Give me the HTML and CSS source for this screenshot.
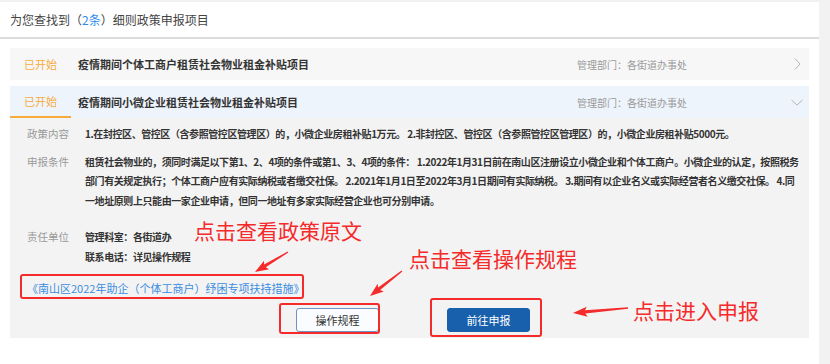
FILE: index.html
```html
<!DOCTYPE html>
<html lang="zh-CN">
<head>
    <meta charset="UTF-8">
    <title>细则政策申报项目</title>
    <link rel="stylesheet" href="styles.css">
</head>
<body>
    <div class="panel">
        <div class="head">为您查找到（<span class="num">2条</span>）细则政策申报项目</div>
        <ul class="list">
            <li class="item">
                <div class="item-head">
                    <span class="state">已开始</span>
                    <span class="title">疫情期间个体工商户租赁社会物业租金补贴项目</span>
                    <span class="dept">管理部门：各街道办事处</span>
                    <span class="arrow">
                        <svg width="7" height="12" viewBox="0 0 7 12"><polyline points="1,0.5 6,6 1,11.5" fill="none" stroke="#b5b5b5" stroke-width="1"/></svg>
                    </span>
                </div>
            </li>
            <li class="item open">
                <div class="item-head">
                    <span class="state">已开始</span>
                    <span class="title">疫情期间小微企业租赁社会物业租金补贴项目</span>
                    <span class="dept">管理部门：各街道办事处</span>
                    <span class="arrow">
                        <svg width="12" height="7" viewBox="0 0 12 7"><polyline points="0.5,1 6,6 11.5,1" fill="none" stroke="#b5b5b5" stroke-width="1"/></svg>
                    </span>
                </div>
                <div class="item-body">
                    <div class="field">
                        <div class="label">政策内容</div>
                        <div class="value">1.在封控区、管控区（含参照管控区管理区）的，小微企业房租补贴1万元。 2.非封控区、管控区（含参照管控区管理区）的，小微企业房租补贴5000元。</div>
                    </div>
                    <div class="field">
                        <div class="label">申报条件</div>
                        <div class="value">租赁社会物业的，须同时满足以下第1、2、4项的条件或第1、3、4项的条件： 1.2022年1月31日前在南山区注册设立小微企业和个体工商户。小微企业的认定，按照税务部门有关规定执行；个体工商户应有实际纳税或者缴交社保。 2.2021年1月1日至2022年3月1日期间有实际纳税。 3.期间有以企业名义或实际经营者名义缴交社保。 4.同一地址原则上只能由一家企业申请，但同一地址有多家实际经营企业也可分别申请。</div>
                    </div>
                    <div class="field unit">
                        <div class="label">责任单位</div>
                        <div class="value">管理科室：各街道办<br>联系电话：详见操作规程</div>
                    </div>
                    <div class="doc"><a href="#">《南山区2022年助企（个体工商户）纾困专项扶持措施》</a></div>
                    <div class="btns">
                        <a class="btn btn-line" href="#">操作规程</a>
                        <a class="btn btn-blue" href="#">前往申报</a>
                    </div>
                </div>
            </li>
        </ul>
    </div>

    <!-- 标注 -->
    <div class="notes">
        <div class="box box1"></div>
        <div class="box box2"></div>
        <div class="box box3"></div>
        <div class="tip tip1">点击查看政策原文</div>
        <div class="tip tip2">点击查看操作规程</div>
        <div class="tip tip3">点击进入申报</div>
        <svg class="marks" width="830" height="364" viewBox="0 0 830 364">
            <g fill="#f52a2a">
                <polygon transform="translate(288,252) rotate(148.8)" points="0,-0.6 27,-1.6 25,-5 38.6,0 25,5 27,1.6 0,0.6"/>
                <polygon transform="translate(402,271) rotate(142)" points="0,-0.6 29,-1.6 27,-5 40.6,0 27,5 29,1.6 0,0.6"/>
                <polygon transform="translate(628,308) rotate(174.8)" points="0,-0.7 43,-1.6 41,-5 55.2,0 41,5 43,1.6 0,0.7"/>
            </g>
        </svg>
    </div>
</body>
</html>
```

FILE: styles.css
```css
* {
    margin: 0;
    padding: 0;
    list-style: none;
}
body {
    position: relative;
    height: 364px;
    overflow: hidden;
    background: #f2f2f2;
    font-family: "Microsoft YaHei", "Noto Sans CJK SC", sans-serif;
    color: #333;
}
a {
    text-decoration: none;
}
.panel {
    margin: 2px 11px 0 0;
    height: 362px;
    background: #fff;
}
.head {
    height: 35px;
    line-height: 35px;
    padding-left: 10px;
    font-size: 12px;
    color: #444;
    border-bottom: 2px solid #dcdcdc;
}
.head .num {
    color: #2d8cf0;
}
.list {
    padding: 9px 10px 0 10px;
}
.item {
    margin-bottom: 6px;
}
.item-head {
    display: flex;
    align-items: center;
    height: 32px;
    background: #f7f7f7;
}
.open .item-head {
    background: #eef4fc;
}
.state {
    width: 61px;
    height: 32px;
    line-height: 32px;
    box-sizing: border-box;
    text-align: center;
    font-size: 11px;
    color: #f6ab3c;
}
.open .state {
    border-bottom: 2px solid #f6ab3c;
    line-height: 31px;
}
.title {
    flex: 1;
    margin-left: 7px;
    font-size: 11px;
    font-weight: bold;
    color: #333;
}
.dept {
    font-size: 10px;
    color: #9a9a9a;
    margin-right: 98px;
}
.arrow {
    width: 24px;
    display: flex;
    justify-content: center;
    align-items: center;
}
.item-body {
    background: #f3f3f3;
    padding: 6px 10px 6px 17px;
}
.field {
    display: flex;
    line-height: 19.5px;
    margin-bottom: 8px;
}
.field.unit {
    margin-top: 17px;
    margin-bottom: 0;
}
.label {
    width: 58px;
    flex-shrink: 0;
    font-size: 10.5px;
    color: #999;
}
.value {
    flex: 1;
    font-size: 10px;
    letter-spacing: -0.42px;
    font-weight: bold;
    color: #333;
}
.doc {
    margin-top: 11.5px;
    line-height: 20px;
    font-size: 11px;
}
.doc a {
    color: #3b8de0;
}
.btns {
    display: flex;
    justify-content: center;
    gap: 68px;
    margin-top: 10px;
}
.btn {
    display: block;
    width: 83px;
    height: 24px;
    line-height: 22px;
    box-sizing: border-box;
    border-radius: 3px;
    text-align: center;
    font-size: 11px;
}
.btn-line {
    border: 1px solid #6e94c4;
    background: #fafcff;
    color: #333;
}
.btn-blue {
    border: 1px solid #1860ab;
    background: #1860ab;
    color: #fff;
}

.notes .box {
    position: absolute;
    box-sizing: border-box;
    border: 2px solid #f52a2a;
    border-radius: 3px;
}
.box1 {
    left: 20px;
    top: 274px;
    width: 284px;
    height: 25px;
}
.box2 {
    left: 279px;
    top: 303px;
    width: 101px;
    height: 31px;
}
.box3 {
    left: 430px;
    top: 298px;
    width: 112px;
    height: 39px;
}
.tip {
    position: absolute;
    font-size: 21px;
    line-height: 24px;
    color: #f52a2a;
    white-space: nowrap;
}
.tip1 {
    left: 194px;
    top: 218px;
}
.tip2 {
    left: 409px;
    top: 246px;
}
.tip3 {
    left: 633px;
    top: 298px;
}
.marks {
    position: absolute;
    left: 0;
    top: 0;
}
```
